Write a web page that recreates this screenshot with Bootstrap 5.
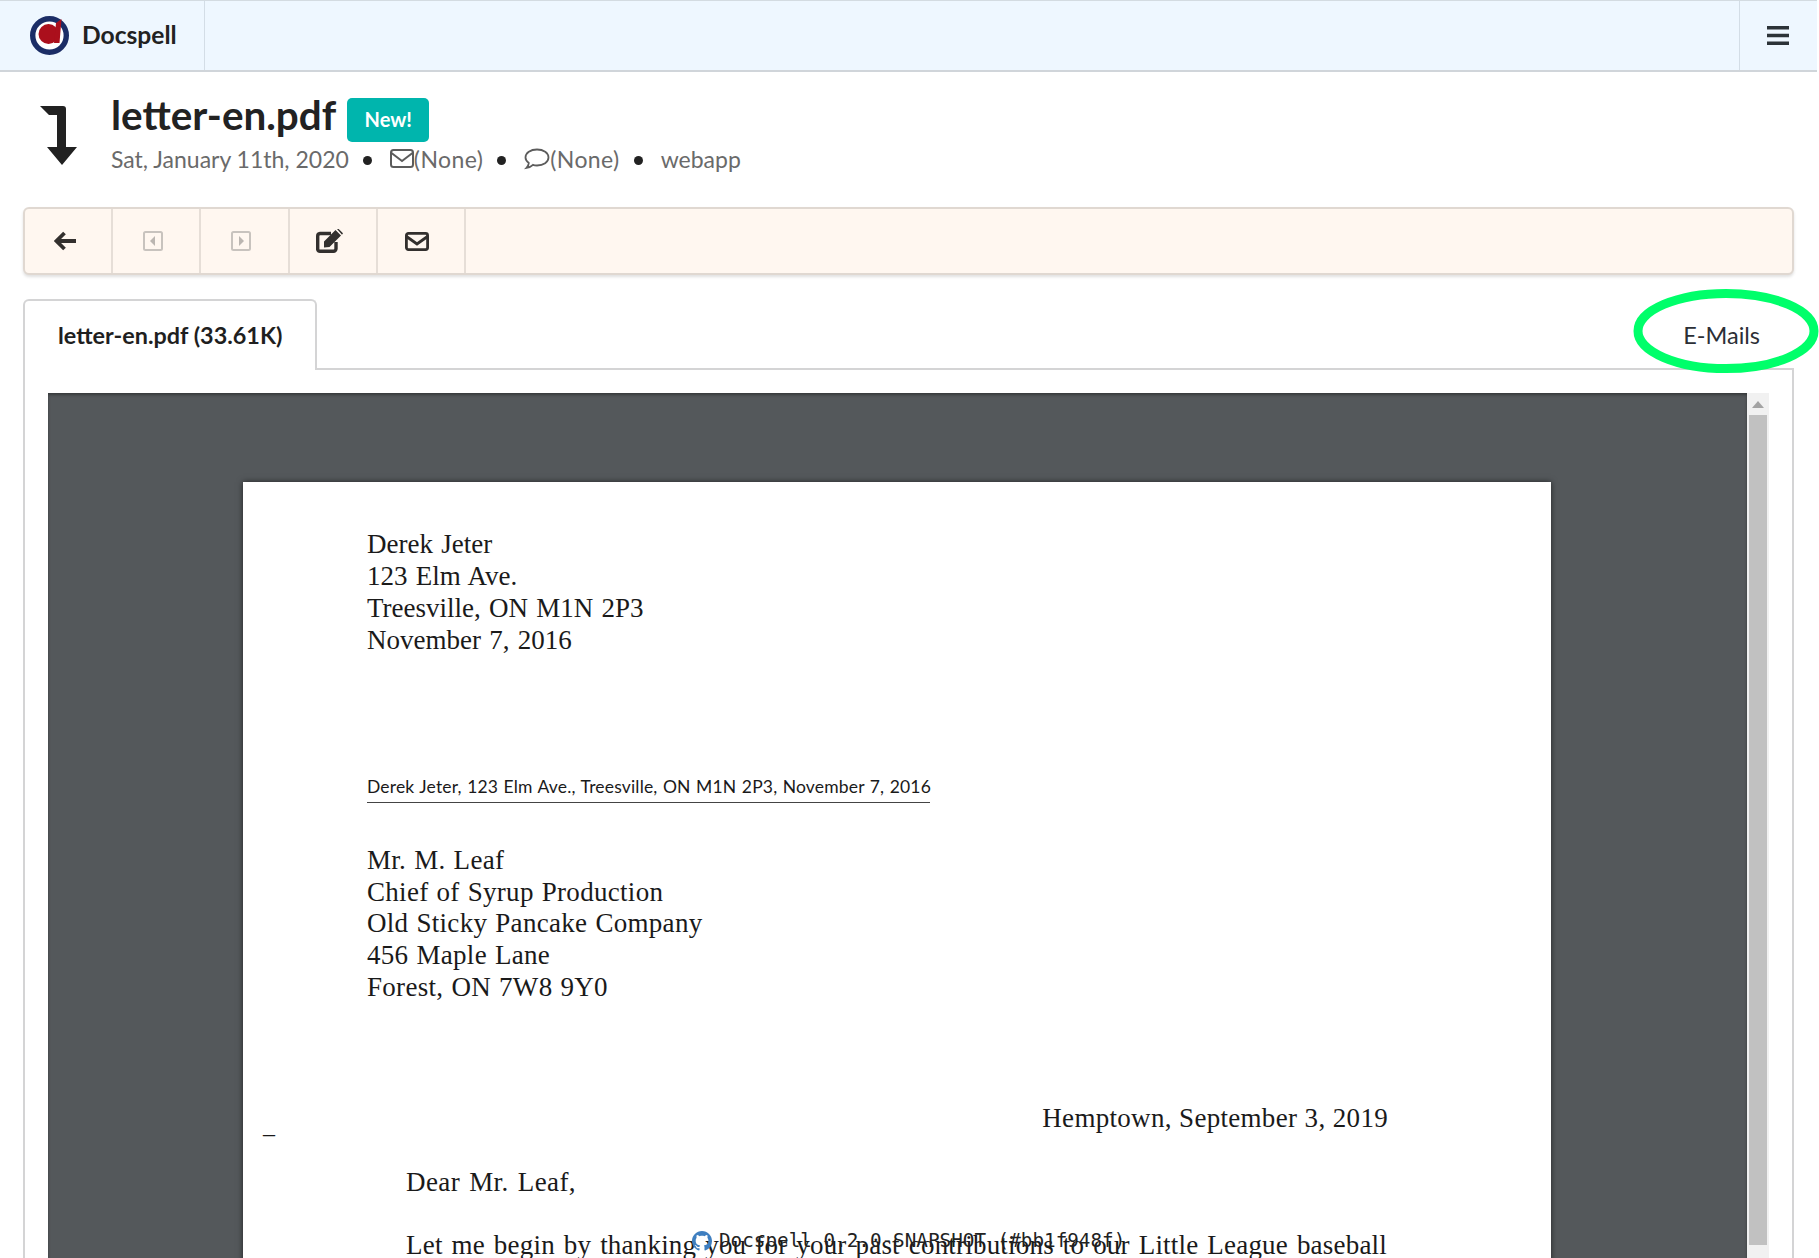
<!DOCTYPE html>
<html lang="en"><head><meta charset="utf-8"><title>Docspell</title>
<link href="https://cdn.jsdelivr.net/npm/bootstrap@5.3.0/dist/css/bootstrap.min.css" rel="stylesheet">
<style>
html,body{height:1258px;overflow:hidden;background:#fff;}
body{font-family:Lato,"Liberation Sans",sans-serif;color:#212121;position:relative;}
.topbar{height:72px;padding:0;background:#eef7ff;border-top:1px solid #d3dbe1;border-bottom:2px solid #d0d5da;margin-right:2px;align-items:stretch;flex-wrap:nowrap;}
.brandcell{width:205px;border-right:1px solid #d3dde6;padding-left:30px;gap:13px;font-size:24.6px;font-weight:700;color:#222;}
.burgercell{width:78px;border-left:1px solid #d3dde6;padding:0 2px 1px 0;}
.headblock{padding:21px 0 0 38px;height:135px;gap:33px;}
.headarrow{margin-top:12px;}
.doctitle{font-size:40.4px;font-weight:700;line-height:44px;color:#222;margin:0;}
.newtag{background:#00b5ad;color:#fff;font-size:20px;font-weight:700;width:82px;height:44px;border-radius:5px;margin:5px 0 0 11px;padding-bottom:3px;}
.metaline{font-size:23px;color:#6a6a6a;line-height:30px;margin-top:2px;}
.nonelabel{letter-spacing:.4px;}
.sepdot{width:9px;height:9px;border-radius:50%;background:#222;margin:3px 18px 0 14px;}
.toolstrip{margin:0 25px 0 23px;height:68px;background:#fff7f0;border:2px solid #e0d8d1;border-radius:6px;box-shadow:0 2px 3px rgba(0,0,0,.12);}
.toolcell{width:88.2px;border-right:2px solid #e6ded7;padding-right:7px;}
.tabrow{margin:24px 25px 0 23px;height:71px;border-bottom:2px solid #d4d4d5;--bs-nav-tabs-border-width:0;position:relative;}
.filetab{width:294px;height:71px;background:#fff;border:2px solid #d4d4d5;border-bottom:0;border-radius:6px 6px 0 0;font-size:23.4px;font-weight:700;color:#1f1f1f;padding-left:33px;margin-bottom:-2px;position:relative;}
.mailtab{font-size:23.5px;color:#2c2f36;margin:4px 34px 0 0;}
.tabbody{margin:0 25px 0 23px;height:890px;border-left:2px solid #d4d4d5;border-right:2px solid #d4d4d5;padding:23px 22px 0 23px;overflow:hidden;}
.viewer{height:870px;overflow:hidden;}
.graypane{width:1699px;background:#54585b;padding-top:89px;box-shadow:inset 0 2px 3px rgba(0,0,0,.35);}
.sheet{margin-left:195px;width:1308px;height:790px;background:#fff;box-shadow:0 0 6px rgba(0,0,0,.6);font-family:"Liberation Serif",serif;color:#1a1a1a;font-size:27px;line-height:32px;padding:46px 0 0 124px;position:relative;}
.sheet p{margin:0;}
.senderblock{word-spacing:1.5px;}
.smallrule{margin-top:120px!important;width:563px;font-family:Lato,"Liberation Sans",sans-serif;font-size:17.5px;letter-spacing:.17px;word-spacing:.8px;line-height:22px;height:27px;border-bottom:1px solid #444;white-space:nowrap;}
.addressee{margin-top:42px!important;letter-spacing:.3px;word-spacing:1px;line-height:31.7px;}
.datedline{margin-top:98px!important;width:1021px;text-align:right;letter-spacing:.3px;word-spacing:.3px;}
.dearline{margin:32px 0 0 39px!important;letter-spacing:.4px;word-spacing:2px;}
.bodyline{margin:31px 0 0 39px!important;width:982px;white-space:nowrap;letter-spacing:.2px;word-spacing:2px;}
.dashmark{position:absolute;left:20px;top:639px;line-height:1;font-size:24px;}
.scrolltrack{width:22px;background:#f1f1f1;}
.scrollup{height:22px;}
.scrollthumb{margin:0 2px;width:18px;height:830px;background:#c1c1c1;}
.footnote{position:absolute;left:692px;top:1229px;gap:7px;font-family:"DejaVu Sans Mono",monospace;font-size:19.3px;line-height:24px;color:#222;white-space:nowrap;}
.greenloop{position:absolute;left:1630px;top:284px;}
</style></head>
<body>
<nav class="navbar topbar d-flex justify-content-between">
  <div class="brandcell d-flex align-items-center">
    <svg width="39" height="39" viewBox="0 0 39 39" aria-hidden="true"><circle cx="19.500" cy="19.500" r="16.800" fill="#fff" stroke="#1b2d66" stroke-width="5.400"/><circle cx="18.500" cy="18" r="10" fill="#ab0f1c"/><path d="M26 7L31.500 3 29.500 27 24 27z" fill="#ab0f1c"/></svg>
    <span>Docspell</span>
  </div>
  <div class="burgercell d-flex align-items-center justify-content-center">
    <svg width="22" height="19" viewBox="0 0 22 19" aria-hidden="true"><path d="M0 1.800h22M0 9.500h22M0 17.200h22" stroke="#2c3338" stroke-width="3.600"/></svg>
  </div>
</nav>
<header class="headblock d-flex">
  <svg width="40" height="62" viewBox="0 0 40 62" class="headarrow flex-shrink-0" aria-hidden="true"><path d="M2 1H25q3 0 3 3V42h11L24 60 9 42h10V10H11z" fill="#212121"/></svg>
  <div>
    <div class="d-flex align-items-start"><h1 class="doctitle">letter-en.pdf</h1><span class="newtag d-flex align-items-center justify-content-center">New!</span></div>
    <div class="metaline d-flex align-items-center">
      <span>Sat, January 11th, 2020</span><span class="sepdot"></span>
      <svg width="24" height="20" viewBox="0 0 24 20" aria-hidden="true"><rect x="1" y="1" width="22" height="17" rx="2.500" fill="none" stroke="#5c5c5c" stroke-width="2"/><path d="M1.500 4l10.500 8 10.500-8" fill="none" stroke="#5c5c5c" stroke-width="2"/></svg>
      <span class="nonelabel">(None)</span><span class="sepdot"></span>
      <svg width="26" height="22" viewBox="0 0 26 22" aria-hidden="true"><path d="M13 1.500c6.500 0 11.500 3.500 11.500 8s-5 8-11.500 8c-1.500 0-3-.2-4-.6-1.500 1.500-4 2.600-6.500 3 1.500-1.500 2.200-3.200 2.300-5C2.800 13.500 1.500 11.600 1.500 9.500c0-4.500 5-8 11.500-8z" fill="none" stroke="#5c5c5c" stroke-width="1.800"/></svg>
      <span class="nonelabel">(None)</span><span class="sepdot"></span>
      <span>webapp</span>
    </div>
  </div>
</header>
<div class="toolstrip d-flex">
  <div class="toolcell d-flex align-items-center justify-content-center"><svg width="22" height="20" viewBox="0 0 22 20" aria-hidden="true"><path d="M10.500 2L2.500 10l8 8M3.500 10h18.500" fill="none" stroke="#33302e" stroke-width="3.800"/></svg></div>
  <div class="toolcell d-flex align-items-center justify-content-center"><svg width="20" height="20" viewBox="0 0 20 20" aria-hidden="true"><rect x="1" y="1" width="18" height="18" rx="1.500" fill="none" stroke="#c8c3be" stroke-width="2"/><path d="M12 5v10L7 10z" fill="#bbb6b1"/></svg></div>
  <div class="toolcell d-flex align-items-center justify-content-center"><svg width="20" height="20" viewBox="0 0 20 20" aria-hidden="true"><rect x="1" y="1" width="18" height="18" rx="1.500" fill="none" stroke="#c8c3be" stroke-width="2"/><path d="M8 5v10l5-5z" fill="#bbb6b1"/></svg></div>
  <div class="toolcell d-flex align-items-center justify-content-center"><svg width="27" height="24" viewBox="0 0 27 24" aria-hidden="true"><path d="M15 4.500H4A2.500 2.500 0 0 0 1.700 7v13.500A2.500 2.500 0 0 0 4 22.300h13.500a2.500 2.500 0 0 0 2.500-2.500V13" fill="none" stroke="#33302e" stroke-width="3.400"/><path d="M8 12.500L19.500 1l5.500 5.500L13.500 18 8 18.500zM21 0l1.500-.2 4.500 4.500-1 1.500z" fill="#33302e"/></svg></div>
  <div class="toolcell d-flex align-items-center justify-content-center"><svg width="24" height="19" viewBox="0 0 24 19" aria-hidden="true"><rect x="1.400" y="1.400" width="21.200" height="16.200" rx="2" fill="none" stroke="#33302e" stroke-width="2.800"/><path d="M1.500 4.500L12 12l10.500-7.500" fill="none" stroke="#33302e" stroke-width="2.800"/></svg></div>
</div>
<div class="tabrow nav nav-tabs d-flex justify-content-between align-items-center flex-nowrap">
  <div class="filetab d-flex align-items-center align-self-start">letter-en.pdf (33.61K)</div>
  <div class="mailtab">E-Mails</div>
</div>
<main class="tabbody">
  <div class="viewer d-flex">
    <div class="graypane flex-shrink-0">
      <div class="sheet">
        <div class="senderblock"><p>Derek Jeter</p><p>123 Elm Ave.</p><p>Treesville, ON M1N 2P3</p><p>November 7, 2016</p></div>
        <p class="smallrule">Derek Jeter, 123 Elm Ave., Treesville, ON M1N 2P3, November 7, 2016</p>
        <div class="addressee"><p>Mr. M. Leaf</p><p>Chief of Syrup Production</p><p>Old Sticky Pancake Company</p><p>456 Maple Lane</p><p>Forest, ON 7W8 9Y0</p></div>
        <p class="datedline">Hemptown, September 3, 2019</p>
        <span class="dashmark">–</span>
        <p class="dearline">Dear Mr. Leaf,</p>
        <p class="bodyline">Let me begin by thanking you for your past contributions to our Little League baseball</p>
      </div>
    </div>
    <div class="scrolltrack flex-shrink-0">
      <div class="scrollup d-flex align-items-center justify-content-center"><svg width="12" height="7" viewBox="0 0 12 7" aria-hidden="true"><path d="M6 0l6 7H0z" fill="#a3a3a3"/></svg></div>
      <div class="scrollthumb"></div>
    </div>
  </div>
</main>
<footer class="footnote d-flex align-items-center">
  <svg width="20" height="20" viewBox="0 0 16 16" aria-hidden="true"><path fill="#3f7fc0" d="M8 0C3.580 0 0 3.580 0 8c0 3.540 2.290 6.530 5.470 7.590.4.070.55-.17.55-.38 0-.19-.01-.82-.01-1.490-2.010.37-2.530-.49-2.690-.94-.09-.23-.48-.94-.82-1.130-.28-.15-.68-.52-.01-.53.63-.01 1.080.58 1.230.82.720 1.210 1.870.87 2.330.66.070-.52.280-.87.510-1.070-1.780-.2-3.640-.89-3.640-3.950 0-.87.310-1.590.820-2.150-.08-.2-.36-1.020.08-2.120 0 0 .67-.21 2.200.82.640-.18 1.320-.27 2-.27s1.360.09 2 .27c1.530-1.040 2.200-.82 2.200-.82.440 1.100.160 1.920.080 2.120.510.560.820 1.270.820 2.150 0 3.070-1.870 3.750-3.650 3.950.290.250.540.730.540 1.480 0 1.070-.01 1.930-.01 2.200 0 .21.150.46.550.38A8.010 8.010 0 0 0 16 8c0-4.420-3.580-8-8-8z"/></svg>
  <span>Docspell 0.2.0-SNAPSHOT (#bb1f948f)</span>
</footer>
<svg class="greenloop" width="189" height="90" viewBox="0 0 189 90" aria-hidden="true"><ellipse cx="96" cy="47" rx="88" ry="37.500" fill="none" stroke="#00ff6a" stroke-width="9"/></svg>
</body></html>
